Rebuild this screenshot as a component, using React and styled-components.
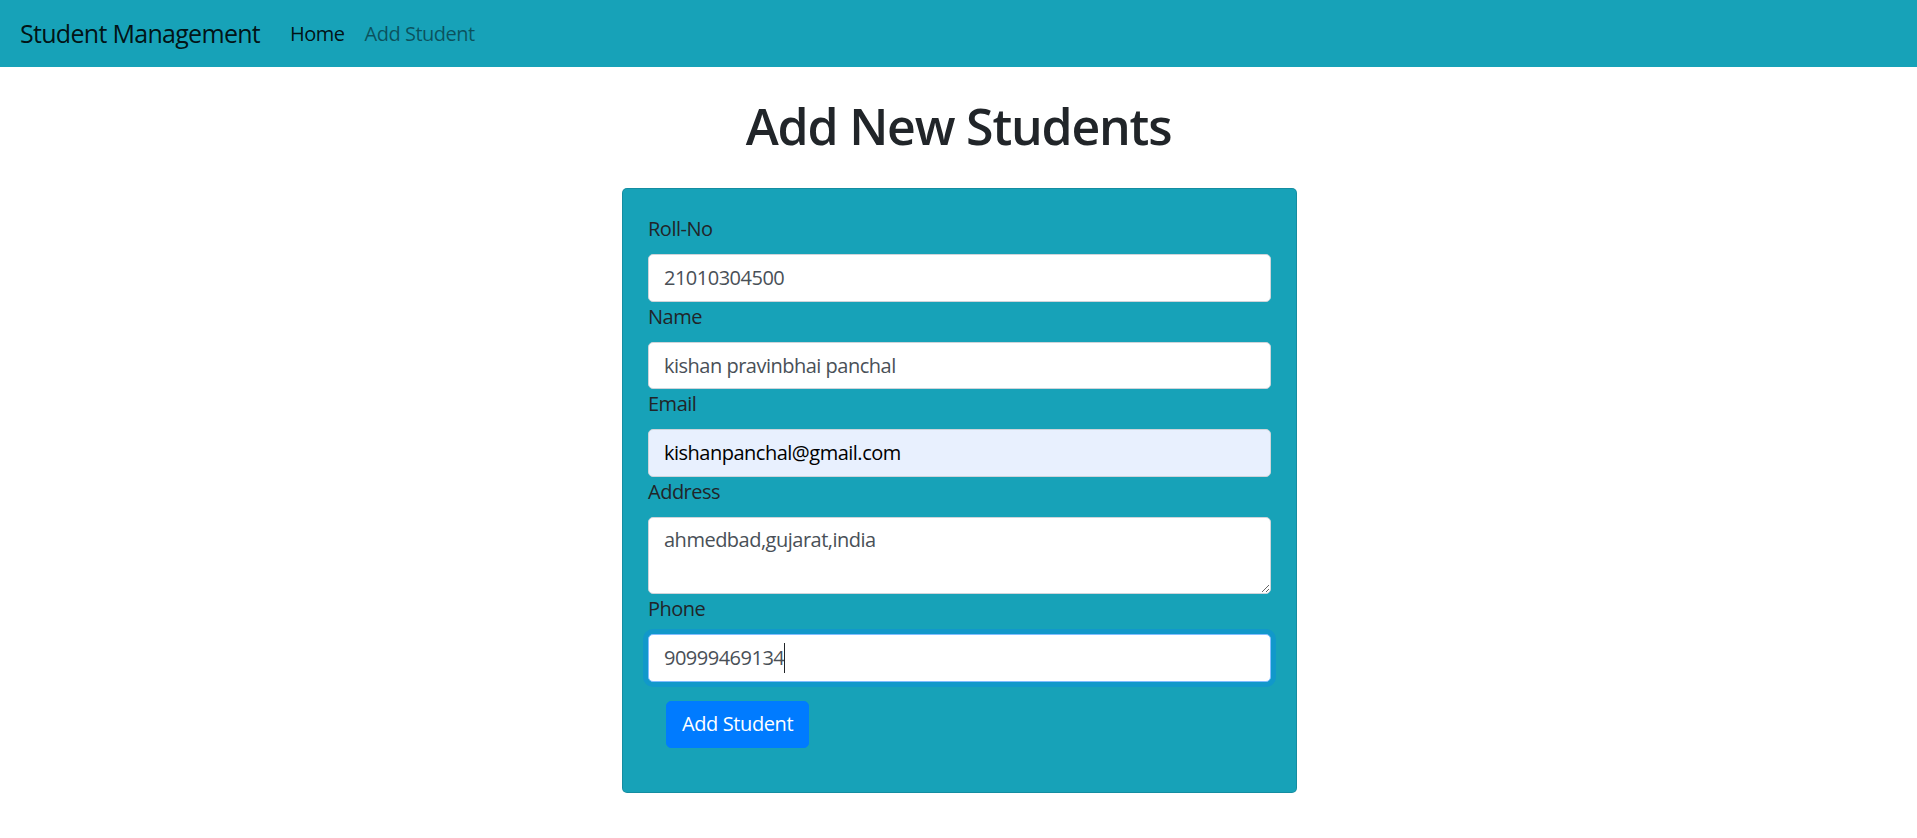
import React from "react";
import styled, { createGlobalStyle } from "styled-components";

const GlobalStyle = createGlobalStyle`
    * { box-sizing: border-box; }
    body {
        margin: 0;
        background: #fff;
        color: #212529;
        font-family: "Open Sans", "Noto Sans", sans-serif;
        font-size: 20px;
        line-height: 1.5;
        letter-spacing: -0.5px;
    }
`;

const Navbar = styled.nav`
    display: flex;
    align-items: center;
    height: 67px;
    padding: 0 20px;
    background-color: #17a2b8;
`;

const Brand = styled.a`
    font-size: 25px;
    line-height: 37px;
    margin-right: 20px;
    letter-spacing: -0.7px;
    color: rgba(0, 0, 0, 0.9);
    text-decoration: none;
    white-space: nowrap;
`;

const NavLink = styled.a`
    padding: 0 10px;
    font-size: 20px;
    color: ${props => props.active ? "rgba(0,0,0,.9)" : "rgba(0,0,0,.5)"};
    text-decoration: none;
`;

const Heading = styled.h1`
    margin: 29px 0 32px;
    text-align: center;
    font-size: 50px;
    font-weight: 600;
    line-height: 60px;
    letter-spacing: -1.2px;
    color: #212529;
`;

const Card = styled.div`
    width: 675px;
    margin: 0 auto;
    padding: 25px;
    background-color: #17a2b8;
    border: 1px solid rgba(0, 0, 0, 0.125);
    border-radius: 5px;
    transform: translateX(1px);
`;

const Form = styled.form`
    display: flex;
    flex-direction: column;
    align-items: flex-start;
`;

const Label = styled.label`
    display: block;
    line-height: 30px;
    margin-bottom: 10px;
    padding-top: 1px;
    margin-top: -1px;
    color: #212529;
`;

const Field = styled.div`
    position: relative;
    width: 100%;
`;

const Input = styled.input`
    display: block;
    width: 100%;
    height: 47.5px;
    padding: 7.5px 15px;
    font: inherit;
    font-size: 20px;
    line-height: 30px;
    letter-spacing: -0.5px;
    color: ${props => props.autofill ? "#000" : "#495057"};
    background-color: ${props => props.autofill ? "#e8f0fe" : "#fff"};
    border: 1px solid ${props => props.focused ? "#80bdff" : "#ced4da"};
    border-radius: 5px;
    box-shadow: ${props => props.focused ? "0 0 0 5px rgba(0,123,255,.25)" : "none"};
    outline: none;
`;

const TextArea = styled.textarea`
    display: block;
    width: 100%;
    height: 77.5px;
    padding: 7.5px 15px;
    font: inherit;
    font-size: 20px;
    line-height: 30px;
    letter-spacing: -0.5px;
    color: #495057;
    background: #fff;
    border: 1px solid #ced4da;
    border-radius: 5px;
    resize: vertical;
    outline: none;
`;

const Caret = styled.span`
    position: absolute;
    left: 16px;
    top: 8.5px;
    font-size: 20px;
    line-height: 30px;
    letter-spacing: -0.5px;
    color: transparent;
    border-right: 1px solid #212529;
    pointer-events: none;
    white-space: pre;
`;

const SubmitButton = styled.button`
    margin: 19px 18px;
    padding: 7.5px 15px;
    font: inherit;
    font-size: 20px;
    line-height: 30px;
    letter-spacing: -0.4px;
    color: #fff;
    background-color: #007bff;
    border: 1px solid #007bff;
    border-radius: 5px;
    cursor: pointer;
`;

const fields = [
    { label: "Roll-No", value: "21010304500" },
    { label: "Name", value: "kishan pravinbhai panchal" },
    { label: "Email", value: "kishanpanchal@gmail.com", autofill: true },
    { label: "Address", value: "ahmedbad,gujarat,india", area: true },
    { label: "Phone", value: "90999469134", focused: true },
];

function App() {
    return (
        <>
            <GlobalStyle />
            <Navbar>
                <Brand href="#">Student Management</Brand>
                <NavLink href="#" active>Home</NavLink>
                <NavLink href="#">Add Student</NavLink>
            </Navbar>

            <Heading>Add New Students</Heading>

            <Card>
                <Form onSubmit={e => e.preventDefault()}>
                    {fields.map(f => (
                        <React.Fragment key={f.label}>
                            <Label>{f.label}</Label>
                            <Field>
                                {f.area ? (
                                    <TextArea rows={2} defaultValue={f.value} />
                                ) : (
                                    <Input
                                        type="text"
                                        defaultValue={f.value}
                                        autofill={f.autofill ? 1 : 0}
                                        focused={f.focused ? 1 : 0}
                                    />
                                )}
                                {f.focused && <Caret>{f.value}</Caret>}
                            </Field>
                        </React.Fragment>
                    ))}
                    <SubmitButton type="submit">Add Student</SubmitButton>
                </Form>
            </Card>
        </>
    );
}

export default App;
